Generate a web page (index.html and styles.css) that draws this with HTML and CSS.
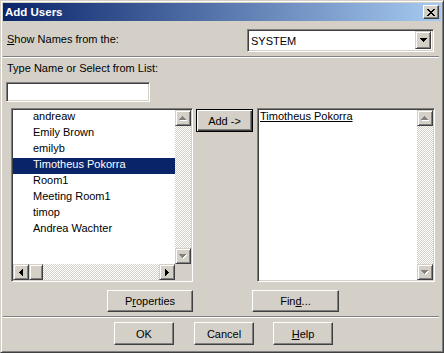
FILE: index.html
```html
<!DOCTYPE html>
<html lang="en">
<head>
    <meta charset="UTF-8">
    <title>Add Users</title>
    <link rel="stylesheet" href="styles.css">
</head>
<body>
    <div class="window">
        <div class="titlebar">
            <span class="title">Add Users</span>
            <button class="close-btn" aria-label="Close">
                <svg width="8" height="7" viewBox="0 0 8 7" shape-rendering="crispEdges"><path d="M0 0h2v1H0zM6 0h2v1H6zM1 1h2v1H1zM5 1h2v1H5zM2 2h4v1H2zM3 3h2v1H3zM2 4h4v1H2zM1 5h2v1H1zM5 5h2v1H5zM0 6h2v1H0zM6 6h2v1H6z" fill="#000"/></svg>
            </button>
        </div>

        <div class="client">
            <div class="names-row">
                <label class="label names-label"><u>S</u>how Names from the:</label>
                <div class="combo">
                    <span class="combo-text">SYSTEM</span>
                    <span class="scroll-btn combo-btn">
                        <svg width="7" height="4" viewBox="0 0 7 4" shape-rendering="crispEdges"><path d="M0 0h7v1H6v1H5v1H4v1H3V3H2V2H1V1H0z" fill="#000"/></svg>
                    </span>
                </div>
            </div>

            <div class="etched"></div>

            <label class="label type-label">Type Name or Select from List:</label>
            <input class="field name-input" type="text">

            <div class="lists-row">
                <!-- lista de origen -->
                <div class="listbox source-list">
                    <div class="list-body">
                        <ul class="items">
                            <li>andreaw</li>
                            <li>Emily Brown</li>
                            <li>emilyb</li>
                            <li class="selected">Timotheus Pokorra</li>
                            <li>Room1</li>
                            <li>Meeting Room1</li>
                            <li>timop</li>
                            <li>Andrea Wachter</li>
                        </ul>
                        <div class="vscroll">
                            <span class="scroll-btn">
                                <svg width="8" height="5" viewBox="0 0 8 5" shape-rendering="crispEdges"><path d="M4 1h1v1h1v1h1v1h1v1H1V4h1V3h1V2h1z" fill="#fff"/><path d="M3 0h1v1h1v1h1v1h1v1H0V3h1V2h1V1h1z" fill="#808080"/></svg>
                            </span>
                            <span class="track"></span>
                            <span class="scroll-btn">
                                <svg width="8" height="5" viewBox="0 0 8 5" shape-rendering="crispEdges"><path d="M1 1h7v1H7v1H6v1H5v1H4V4H3V3H2V2H1z" fill="#fff"/><path d="M0 0h7v1H6v1H5v1H4v1H3V3H2V2H1V1H0z" fill="#808080"/></svg>
                            </span>
                        </div>
                    </div>
                    <div class="hscroll-row">
                        <div class="hscroll">
                            <span class="scroll-btn">
                                <svg width="4" height="7" viewBox="0 0 4 7" shape-rendering="crispEdges"><path d="M3 0h1v7H3V6H2V5H1V4H0V3h1V2h1V1h1z" fill="#000"/></svg>
                            </span>
                            <span class="scroll-btn thumb"></span>
                            <span class="track"></span>
                            <span class="scroll-btn">
                                <svg width="4" height="7" viewBox="0 0 4 7" shape-rendering="crispEdges"><path d="M0 0h1v1h1v1h1v1h1v1H3v1H2v1H1v1H0z" fill="#000"/></svg>
                            </span>
                        </div>
                        <div class="corner"></div>
                    </div>
                </div>

                <div class="add-col">
                    <button class="btn default-btn add-btn">Add -&gt;</button>
                </div>

                <!-- lista de destino -->
                <div class="listbox target-list">
                    <div class="list-body">
                        <ul class="items chosen">
                            <li>Timotheus Pokorra</li>
                        </ul>
                        <div class="vscroll">
                            <span class="scroll-btn">
                                <svg width="8" height="5" viewBox="0 0 8 5" shape-rendering="crispEdges"><path d="M4 1h1v1h1v1h1v1h1v1H1V4h1V3h1V2h1z" fill="#fff"/><path d="M3 0h1v1h1v1h1v1h1v1H0V3h1V2h1V1h1z" fill="#808080"/></svg>
                            </span>
                            <span class="track"></span>
                            <span class="scroll-btn">
                                <svg width="8" height="5" viewBox="0 0 8 5" shape-rendering="crispEdges"><path d="M1 1h7v1H7v1H6v1H5v1H4V4H3V3H2V2H1z" fill="#fff"/><path d="M0 0h7v1H6v1H5v1H4v1H3V3H2V2H1V1H0z" fill="#808080"/></svg>
                            </span>
                        </div>
                    </div>
                </div>
            </div>

            <div class="mid-buttons">
                <button class="btn properties-btn">P<u>r</u>operties</button>
                <button class="btn find-btn">Fin<u>d</u>...</button>
            </div>

            <div class="etched"></div>

            <div class="bottom-buttons">
                <button class="btn ok-btn">OK</button>
                <button class="btn cancel-btn">Cancel</button>
                <button class="btn help-btn"><u>H</u>elp</button>
            </div>
        </div>
    </div>
</body>
</html>
```

FILE: styles.css
```css
:root {
    --face: #d4d0c8;
    --shadow: #808080;
    --dark: #404040;
    --highlight: #0a246a;
}

* {
    box-sizing: border-box;
}

body {
    margin: 0;
    font-family: 'Liberation Sans', Arial, sans-serif;
    font-size: 11px;
    color: #000;
    background: var(--face);
}

u {
    text-decoration-thickness: 1px;
    text-underline-offset: 1px;
}

.window {
    width: 444px;
    height: 353px;
    background: var(--face);
    border: 1px solid;
    border-color: var(--face) var(--dark) var(--dark) var(--face);
    box-shadow: inset 1px 1px #fff, inset -1px -1px var(--shadow);
    padding: 2px;
    display: flex;
    flex-direction: column;
}

.titlebar {
    height: 18px;
    display: flex;
    align-items: center;
    justify-content: space-between;
    padding: 0 2px;
    background: linear-gradient(to right, #0a246a, #a6caf0);
}

.title {
    color: #fff;
    font-weight: bold;
    font-size: 11.5px;
    line-height: 18px;
}

.close-btn {
    width: 16px;
    height: 14px;
    padding: 0;
    display: flex;
    align-items: center;
    justify-content: center;
    background: var(--face);
    border: 1px solid;
    border-color: #fff var(--dark) var(--dark) #fff;
    box-shadow: inset -1px -1px var(--shadow);
}

.client {
    flex: 1;
}

.label {
    display: block;
    line-height: 13px;
}

.names-row {
    margin-top: 8px;
    display: flex;
    justify-content: space-between;
    align-items: flex-start;
    padding: 0 7px 0 4px;
}

.names-label {
    margin-top: 4px;
}

.combo {
    width: 187px;
    height: 23px;
    display: flex;
    align-items: stretch;
    background: #fff;
    border: 1px solid;
    border-color: var(--shadow) #fff #fff var(--shadow);
    box-shadow: inset 1px 1px var(--dark), inset -1px -1px var(--face);
    padding: 1px 2px 2px 1px;
}

.combo-text {
    flex: 1;
    padding: 4px 0 0 2px;
    line-height: 13px;
}

.combo-btn {
    width: 16px;
}

.etched {
    height: 2px;
    margin: 4px 2px 0 0;
    border-top: 1px solid var(--shadow);
    border-bottom: 1px solid #fff;
}

.type-label {
    margin: 4px 0 0 4px;
}

.field {
    background: #fff;
    border: 1px solid;
    border-color: var(--shadow) #fff #fff var(--shadow);
    box-shadow: inset 1px 1px var(--dark), inset -1px -1px var(--face);
}

.name-input {
    display: block;
    width: 144px;
    height: 20px;
    margin: 7px 0 0 3px;
    padding: 0;
    outline: none;
}

.lists-row {
    margin-top: 6px;
    display: flex;
    align-items: flex-start;
    padding-left: 8px;
}

.listbox {
    height: 174px;
    background: #fff;
    border: 1px solid;
    border-color: var(--shadow) #fff #fff var(--shadow);
    box-shadow: inset 1px 1px var(--dark), inset -1px -1px var(--face);
    padding: 1px;
    display: flex;
    flex-direction: column;
}

.source-list {
    width: 182px;
}

.target-list {
    width: 178px;
    margin-left: 4px;
}

.list-body {
    flex: 1;
    display: flex;
    min-height: 0;
}

.items {
    flex: 1;
    list-style: none;
    margin: 0;
    padding: 0;
}

.items li {
    height: 16px;
    line-height: 13px;
    padding: 0 0 3px 20px;
    white-space: nowrap;
}

.items li.selected {
    background: var(--highlight);
    color: #fff;
}

.items.chosen li {
    padding-left: 1px;
    text-decoration: underline;
    text-decoration-thickness: 1px;
    text-underline-offset: 1px;
}

.vscroll {
    width: 16px;
    display: flex;
    flex-direction: column;
}

.track {
    flex: 1;
    background: repeating-conic-gradient(#fff 0 25%, var(--face) 0 50%) 0 0 / 2px 2px;
}

.scroll-btn {
    width: 16px;
    height: 16px;
    flex: none;
    display: flex;
    align-items: center;
    justify-content: center;
    background: var(--face);
    border: 1px solid;
    border-color: var(--face) var(--dark) var(--dark) var(--face);
    box-shadow: inset 1px 1px #fff, inset -1px -1px var(--shadow);
}

.combo-btn {
    height: auto;
}

.hscroll-row {
    height: 16px;
    display: flex;
}

.hscroll {
    flex: 1;
    display: flex;
}

.thumb {
    width: 14px;
}

.corner {
    width: 16px;
    background: var(--face);
}

.add-col {
    margin-left: 3px;
    padding-top: 1px;
}

.btn {
    display: block;
    height: 23px;
    padding: 0;
    font-family: inherit;
    font-size: 11px;
    color: #000;
    background: var(--face);
    border: 1px solid;
    border-color: #fff var(--dark) var(--dark) #fff;
    box-shadow: inset -1px -1px var(--shadow), inset 1px 1px var(--face);
}

.default-btn {
    border-color: #000;
    box-shadow: inset 1px 1px #fff, inset -1px -1px var(--dark), inset -2px -2px var(--shadow);
}

.add-btn {
    width: 57px;
}

.mid-buttons {
    margin-top: 8px;
    display: flex;
}

.properties-btn {
    height: 22px;
    width: 86px;
    margin-left: 104px;
}

.find-btn {
    height: 22px;
    width: 87px;
    margin-left: 59px;
}

.bottom-buttons {
    margin-top: 4px;
    display: flex;
}

.ok-btn,
.cancel-btn,
.help-btn {
    width: 60px;
}

.ok-btn {
    margin-left: 111px;
}

.cancel-btn {
    margin-left: 20px;
}

.help-btn {
    margin-left: 19px;
}
```
